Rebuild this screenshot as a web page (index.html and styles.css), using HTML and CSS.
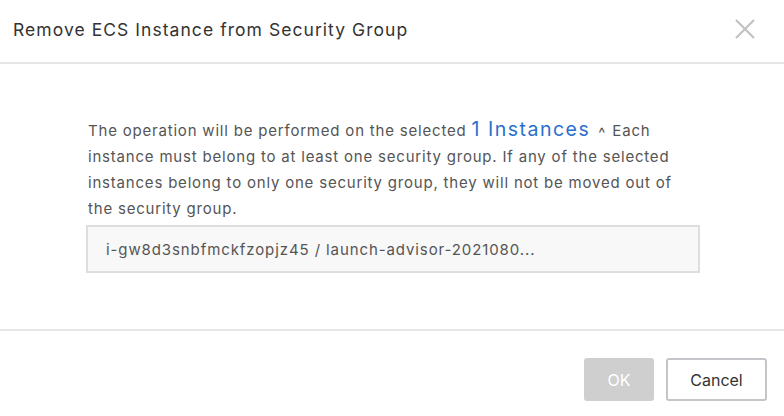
FILE: index.html
```html
<!DOCTYPE html>
<html>
<head>
<meta charset="utf-8">
<link rel="stylesheet" href="styles.css">
</head>
<body>
<div class="dialog">
  <div class="header">
    <div class="title">Remove ECS Instance from Security Group</div>
    <button class="close" aria-label="Close">
      <svg width="22" height="22" viewBox="0 0 22 22"><path d="M2 2 L20 20 M20 2 L2 20" stroke="#c2c2c2" stroke-width="2.2" fill="none"/></svg>
    </button>
  </div>
  <div class="body">
    <p class="msg">The operation will be performed on the selected <span class="link">1 Instances</span> <span class="caret">^</span> Each instance must belong to at least one security group. If any of the selected instances belong to only one security group, they will not be moved out of the security group.</p>
    <div class="list">i-gw8d3snbfmckfzopjz45 / launch-advisor-2021080...</div>
  </div>
  <div class="footer">
    <button class="btn ok">OK</button>
    <button class="btn cancel">Cancel</button>
  </div>
</div>
</body>
</html>
```
FILE: styles.css
```css
html, body { margin: 0; padding: 0; background: #fff; }
body { font-family: Inter, "Liberation Sans", Arial, sans-serif; width: 784px; height: 416px; overflow: hidden; }
.dialog { display: flex; flex-direction: column; height: 416px; }
.header { height: 62px; border-bottom: 2px solid #e6e6e6; display: flex; align-items: center; justify-content: space-between; padding: 0 28px 0 13px; }
.title { font-size: 17.5px; letter-spacing: 1.05px; color: #333; margin-top: -4px; }
.close { background: none; border: 0; padding: 0; margin-top: -4px; display: flex; cursor: pointer; }
.body { height: 267px; border-bottom: 2px solid #e6e6e6; padding: 54px 84px 0 86px; box-sizing: border-box; }
.msg { margin: 0 0 3px 2px; font-size: 15px; letter-spacing: 0.8px; line-height: 26px; color: #555; }
.link { color: #2a6fce; font-size: 19.5px; letter-spacing: 1.5px; line-height: 20px; }
.caret { display: inline-block; font-size: 15px; color: #555; letter-spacing: 0; margin: 0 2px 0 3px; transform: translateY(2px); }
.list { height: 48px; box-sizing: border-box; border: 2px solid #dedede; background: #f8f8f8; padding: 0 18px; display: flex; align-items: center; font-size: 15px; letter-spacing: 0.9px; color: #555; }
.footer { flex: 1; display: flex; justify-content: flex-end; align-items: flex-start; padding: 27px 17px 0 0; gap: 12px; }
.btn { height: 43px; border-radius: 3px; font-family: inherit; font-size: 16px; box-sizing: border-box; }
.ok { width: 70px; background: #cfcfcf; color: #fff; border: 0; }
.cancel { width: 101px; background: #fff; color: #333; border: 2px solid #c3c5c9; }
```
